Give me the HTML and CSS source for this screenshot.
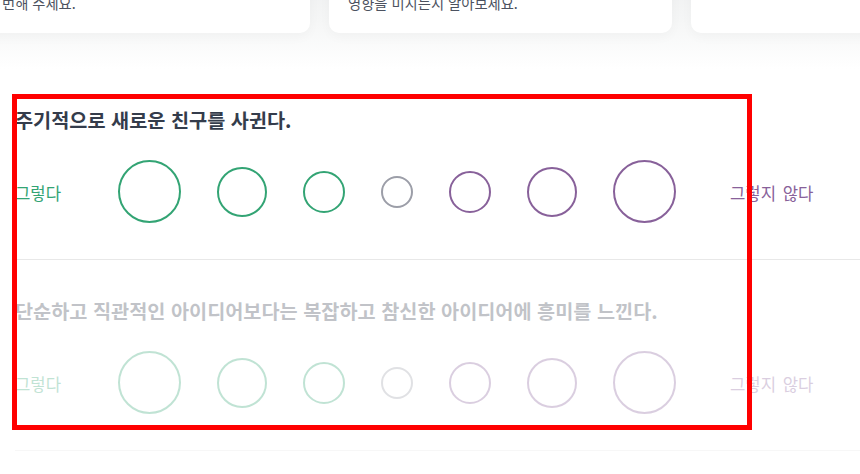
FILE: index.html
```html
<!DOCTYPE html>
<html lang="ko">
<head>
    <meta charset="UTF-8">
    <meta name="viewport" content="width=device-width, initial-scale=1.0">
    <title>성격 유형 검사</title>
    <link rel="stylesheet" href="styles.css">
</head>
<body>
    <div class="tips">
        <div class="tips-row">
            <div class="tip-card first"><p>번해 주세요.</p></div>
            <div class="tip-card"><p>영향을 미치는지 알아보세요.</p></div>
            <div class="tip-card"><p></p></div>
        </div>
    </div>

    <div class="questions">
        <div class="question">
            <div class="question-title">주기적으로 새로운 친구를 사귄다.</div>
            <div class="options">
                <span class="label agree">그렇다</span>
                <div class="circles">
                    <span class="circle agree size-1"></span>
                    <span class="circle agree size-2"></span>
                    <span class="circle agree size-3"></span>
                    <span class="circle neutral size-4"></span>
                    <span class="circle disagree size-3"></span>
                    <span class="circle disagree size-2"></span>
                    <span class="circle disagree size-1"></span>
                </div>
                <span class="label disagree">그렇지 않다</span>
            </div>
        </div>

        <div class="question inactive">
            <div class="question-title">단순하고 직관적인 아이디어보다는 복잡하고 참신한 아이디어에 흥미를 느낀다.</div>
            <div class="options">
                <span class="label agree">그렇다</span>
                <div class="circles">
                    <span class="circle agree size-1"></span>
                    <span class="circle agree size-2"></span>
                    <span class="circle agree size-3"></span>
                    <span class="circle neutral size-4"></span>
                    <span class="circle disagree size-3"></span>
                    <span class="circle disagree size-2"></span>
                    <span class="circle disagree size-1"></span>
                </div>
                <span class="label disagree">그렇지 않다</span>
            </div>
        </div>
    </div>

    <div class="highlight"></div>
</body>
</html>
```

FILE: styles.css
```css
body {
    margin: 0;
    background-color: #fff;
    font-family: "Noto Sans CJK KR", "Noto Sans", sans-serif;
    overflow: hidden;
    position: relative;
    height: 474px;
}

.tips {
    background: linear-gradient(to bottom, #eeeff0 0%, #f5f6f6 45%, #fff 100%);
    padding-bottom: 36px;
}

.tips-row {
    display: flex;
    gap: 19px;
    margin-top: -21px;
    margin-left: -17px;
}

.tip-card {
    flex: 0 0 343px;
    box-sizing: border-box;
    height: 54px;
    padding: 12px 19px 18px;
    background-color: #fff;
    border-radius: 10px;
    box-shadow: 0 4px 12px rgba(0, 0, 0, 0.03);
}

.tip-card.first {
    flex-basis: 327px;
}

.tip-card p {
    margin: 0;
    font-size: 14.3px;
    line-height: 24px;
    color: #4c5260;
    white-space: nowrap;
}

.questions {
    margin-left: 15px;
}

.question {
    padding: 39px 0 36px;
    border-bottom: 1px solid #e8e8e8;
}

.question.inactive {
    opacity: 0.3;
}

.question-title {
    font-size: 19.7px;
    font-weight: 700;
    line-height: 24px;
    color: #343c4b;
    white-space: nowrap;
}

.options {
    display: flex;
    align-items: center;
    height: 63px;
    margin-top: 28px;
}

.label {
    font-size: 16.7px;
    line-height: 24px;
    padding-top: 3px;
    white-space: nowrap;
}

.label.agree {
    width: 103px;
    color: #33a474;
}

.label.disagree {
    margin-left: 54px;
    word-spacing: 2px;
    color: #88619a;
}

.circles {
    display: flex;
    align-items: center;
    gap: 36px;
}

.circle {
    display: block;
    box-sizing: border-box;
    border-radius: 50%;
    border: 2px solid #9c9ea8;
}

.circle.agree {
    border-color: #33a474;
}

.circle.disagree {
    border-color: #88619a;
}

.size-1 {
    width: 63px;
    height: 63px;
}

.size-2 {
    width: 50px;
    height: 50px;
}

.size-3 {
    width: 42px;
    height: 42px;
}

.size-4 {
    width: 32px;
    height: 32px;
}

.highlight {
    position: absolute;
    left: 12px;
    top: 94px;
    width: 740px;
    height: 336px;
    box-sizing: border-box;
    border: 5px solid #ff0000;
}
```
